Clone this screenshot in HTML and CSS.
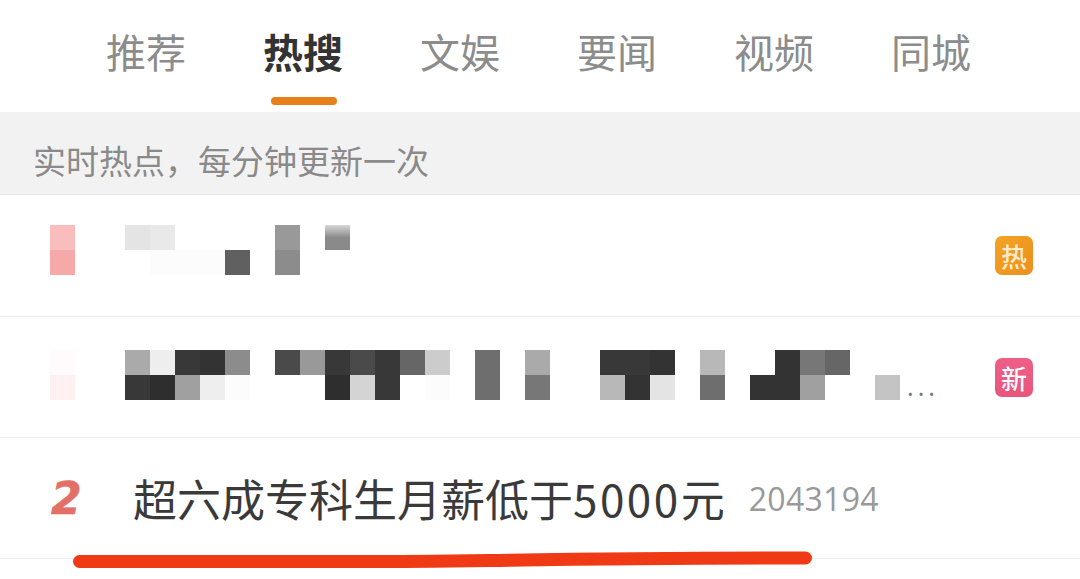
FILE: index.html
```html
<!DOCTYPE html>
<html lang="zh-CN">

<head>
  <meta charset="UTF-8">
  <meta name="viewport" content="width=device-width, initial-scale=1.0">
  <title>热搜</title>
  <link rel="stylesheet" href="styles.css">
</head>

<body>
  <div class="tabs">
    <div class="tab">推荐</div>
    <div class="tab active">热搜</div>
    <div class="tab">文娱</div>
    <div class="tab">要闻</div>
    <div class="tab">视频</div>
    <div class="tab">同城</div>
  </div>

  <div class="notice">实时热点，每分钟更新一次</div>

  <div class="row row-first">
    <div class="rank-blur">
      <span class="pink-1"></span>
      <span class="pink-2"></span>
    </div>
    <div class="mosaic">
      <span class="c-e4"></span><span class="c-e9"></span><span></span><span></span><span></span><span></span><span class="c-99"></span><span></span><span class="c-fade"></span>
      <span></span><span class="c-fc"></span><span class="c-fc"></span><span class="c-fc"></span><span class="c-60"></span><span></span><span class="c-8c"></span><span></span><span></span>
    </div>
    <div class="badge badge-hot">热</div>
  </div>

  <div class="row row-second">
    <div class="rank-blur">
      <span class="pink-3"></span>
      <span class="pink-4"></span>
    </div>
    <div class="mosaic">
      <span class="c-aa"></span><span class="c-ee"></span><span class="c-38"></span><span class="c-33"></span><span class="c-8c"></span><span></span><span class="c-4a"></span><span class="c-99"></span><span class="c-38"></span><span class="c-4a"></span><span class="c-38"></span><span class="c-66"></span><span class="c-cc"></span><span></span><span class="c-6e"></span><span></span><span class="c-aa"></span><span></span><span></span><span class="c-38"></span><span class="c-38"></span><span class="c-33"></span><span></span><span class="c-bb"></span><span></span><span></span><span class="c-33"></span><span class="c-77"></span><span class="c-66"></span><span></span><span></span>
      <span class="c-38"></span><span class="c-2e"></span><span class="c-a0"></span><span class="c-ee"></span><span class="c-fc"></span><span></span><span></span><span></span><span class="c-2e"></span><span class="c-d4"></span><span class="c-38"></span><span></span><span class="c-fc"></span><span></span><span class="c-6e"></span><span></span><span class="c-77"></span><span></span><span></span><span class="c-bb"></span><span class="c-33"></span><span class="c-e4"></span><span></span><span class="c-6e"></span><span></span><span class="c-33"></span><span class="c-33"></span><span class="c-a0"></span><span></span><span></span><span class="c-c4"></span>
    </div>
    <div class="more">...</div>
    <div class="badge badge-new">新</div>
  </div>

  <div class="row">
    <div class="rank">2</div>
    <div class="title">超六成专科生月薪低于<span class="digits">5000</span>元</div>
    <div class="count">2043194</div>
  </div>

  <!-- hand drawn marker line -->
  <svg class="marker" width="760" height="24" viewBox="0 0 760 24">
    <path d="M13.5 13.5 L 300 13.5 C 400 13.5, 480 10.5, 739.5 10" fill="none" stroke="#ef3a15" stroke-width="13" stroke-linecap="round" />
  </svg>
</body>

</html>
```

FILE: styles.css
```css
* {
  box-sizing: border-box;
}

html,
body {
  height: 100%;
}

body {
  position: relative;
  margin: 0;
  overflow: hidden;
  background-color: #fff;
  font-family: "Noto Sans CJK SC", "Noto Sans", sans-serif;
}

/* tabs */
.tabs {
  display: flex;
  gap: 77px;
  height: 112px;
  padding-left: 106px;
}

.tab {
  position: relative;
  width: 80px;
  margin-top: 27px;
  font-size: 40px;
  line-height: 48px;
  color: #8c8c8c;
}

.tab.active {
  font-weight: 700;
  color: #333;
}

.tab.active::after {
  content: "";
  position: absolute;
  left: 8px;
  top: 70px;
  width: 66px;
  height: 8px;
  border-radius: 4px;
  background-color: #e8801a;
}

.notice {
  height: 83px;
  padding-left: 33px;
  border-bottom: 1px solid #e9e9e9;
  background-color: #f2f2f2;
  font-size: 33px;
  line-height: 96px;
  color: #8a8a8a;
}

/* list */
.row {
  display: flex;
  align-items: center;
  height: 121px;
  padding-left: 50px;
  border-bottom: 1px solid #eeeeee;
}

.row-first {
  height: 122px;
}

.row-first .mosaic,
.row-first .rank-blur {
  margin-bottom: 11px;
}

.row-second .mosaic,
.row-second .rank-blur {
  margin-bottom: 4px;
}

.rank-blur {
  display: grid;
  grid-template-rows: repeat(2, 25px);
  width: 25px;
  margin-right: 50px;
}

.pink-1 {
  background-color: #f9bdbd;
}

.pink-2 {
  background-color: #f6a9a9;
}

.pink-3 {
  background-color: #fffafb;
}

.pink-4 {
  background-color: #fff0f2;
}

.mosaic {
  display: grid;
  grid-template-columns: repeat(31, 25px);
  grid-template-rows: repeat(2, 25px);
}

.row-first .mosaic {
  grid-template-columns: repeat(9, 25px);
}

.c-fc { background-color: #fcfcfc; }
.c-ee { background-color: #eeeeee; }
.c-e9 { background-color: #e9e9e9; }
.c-e4 { background-color: #e4e4e4; }
.c-d4 { background-color: #d4d4d4; }
.c-cc { background-color: #cccccc; }
.c-c4 { background-color: #c4c4c4; }
.c-bb { background-color: #b8b8b8; }
.c-aa { background-color: #aaaaaa; }
.c-a0 { background-color: #a0a0a0; }
.c-99 { background-color: #999999; }
.c-8c { background-color: #8c8c8c; }
.c-77 { background-color: #777777; }
.c-6e { background-color: #6e6e6e; }
.c-66 { background-color: #666666; }
.c-60 { background-color: #606060; }
.c-4a { background-color: #4a4a4a; }
.c-38 { background-color: #383838; }
.c-33 { background-color: #333333; }
.c-2e { background-color: #2e2e2e; }

.c-fade {
  background: linear-gradient(#d8d8d8, #8a8a8a 50%);
}

.more {
  align-self: flex-end;
  margin: 0 0 41px 7px;
  font-size: 24px;
  line-height: 20px;
  letter-spacing: 4px;
  color: #777;
}

.badge {
  display: flex;
  align-items: center;
  justify-content: center;
  width: 38px;
  height: 39px;
  margin-left: auto;
  margin-right: 47px;
  border-radius: 7px;
  font-size: 26px;
  font-weight: 500;
  color: #ffeccb;
}

.badge-hot {
  background: linear-gradient(135deg, #f3a423, #eb8f1f);
}

.badge-new {
  background: linear-gradient(#ee5f88, #e8557a);
  color: #fff;
}

.rank {
  width: 83px;
  padding-left: 1px;
  font-family: "DejaVu Sans", sans-serif;
  font-size: 44px;
  font-weight: 700;
  font-style: italic;
  -webkit-text-stroke: 0.6px #e46f66;
  color: #e46f66;
}

.title {
  font-size: 44px;
  font-weight: 400;
  color: #3a3a3a;
}

.digits {
  letter-spacing: 2.5px;
}

.count {
  margin-left: 24px;
  font-family: "Open Sans", sans-serif;
  font-size: 32px;
  letter-spacing: 0.3px;
  color: #999;
}

/* the line lies over the last row */
.marker {
  position: absolute;
  left: 66px;
  top: 548px;
}
```
